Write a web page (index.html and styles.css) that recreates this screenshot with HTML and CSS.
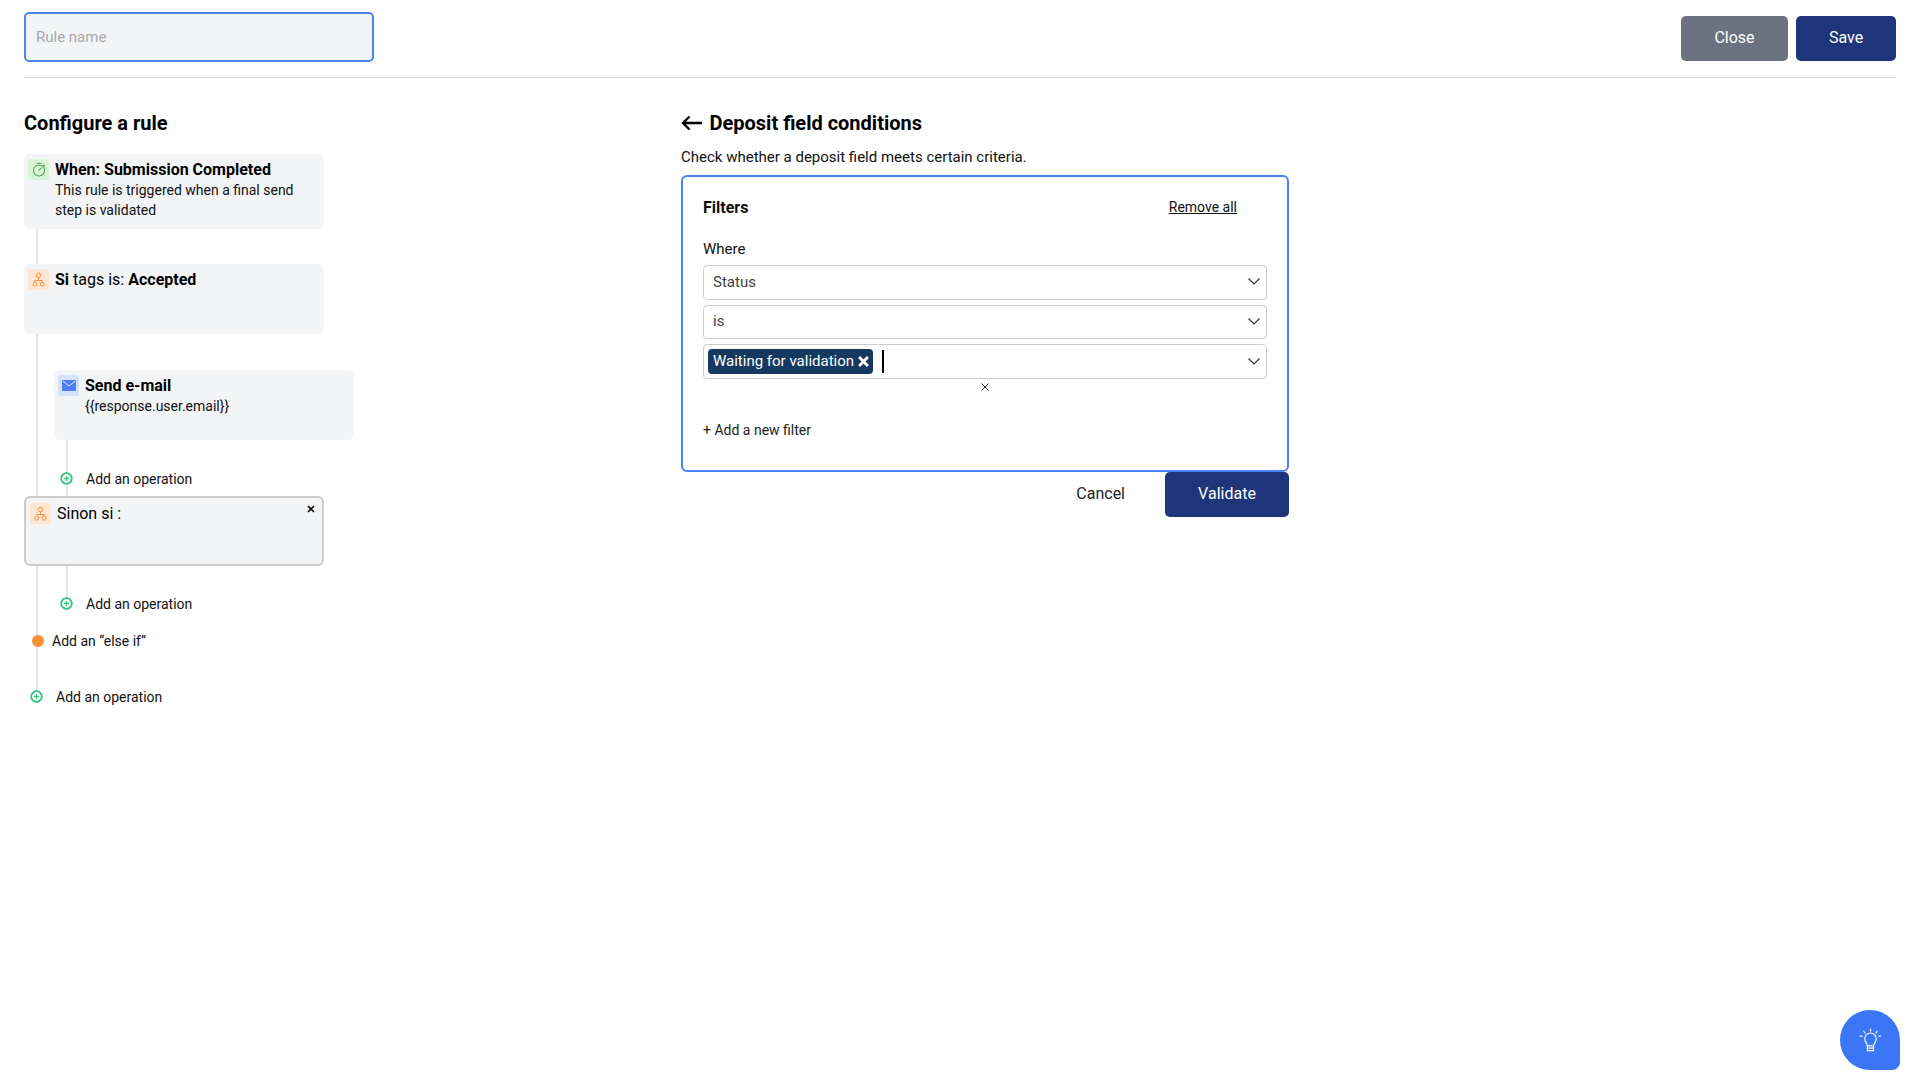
FILE: index.html
```html
<!DOCTYPE html>
<html lang="en">
<head>
    <meta charset="UTF-8">
    <title>Configure a rule</title>
    <link rel="stylesheet" href="styles.css">
</head>
<body>
    <header class="topbar">
        <input class="rule-name" type="text" placeholder="Rule name">
        <div class="topbar-actions">
            <button class="btn btn-close">Close</button>
            <button class="btn btn-save">Save</button>
        </div>
    </header>

    <main class="layout">
        <section class="rule-col">
            <h2 class="heading">Configure a rule</h2>

            <div class="tree">
                <div class="card card-when">
                    <span class="card-icon icon-green">
                        <svg width="14" height="15" viewBox="0 0 14 15" fill="none" stroke="#4aa04e" stroke-width="1.1" stroke-linecap="round"><circle cx="7" cy="8.500" r="5.500"/><path d="M5 1.200h4M7 8.500l2-2.500M11.500 3l1 1"/></svg>
                    </span>
                    <div class="card-text">
                        <div class="card-title"><b>When: Submission Completed</b></div>
                        <div class="card-desc">This rule is triggered when a final send step is validated</div>
                    </div>
                </div>

                <div class="card card-if">
                    <span class="card-icon icon-orange">
                        <svg width="13" height="15" viewBox="0 0 13 15" fill="none" stroke="#fb923c" stroke-width="1"><circle cx="6.500" cy="3.500" r="2.200"/><circle cx="2.800" cy="12.200" r="1.900"/><circle cx="10.200" cy="12.200" r="1.900"/><path d="M6.500 5.700v2.800M2.800 10.300V8.500h7.400v1.800"/></svg>
                    </span>
                    <div class="card-title"><b>Si</b> tags is: <b>Accepted</b></div>
                </div>

                <div class="branch branch-first">
                    <div class="card card-mail">
                        <span class="card-icon icon-blue">
                            <svg width="14" height="11" viewBox="0 0 14 11"><path d="M0 0h14v11H0z" fill="#4f7cf7"/><path d="M.5 1l6.500 5 6.500-5" fill="none" stroke="#dbe6fe" stroke-width="1"/></svg>
                        </span>
                        <div class="card-text">
                            <div class="card-title"><b>Send e-mail</b></div>
                            <div class="card-desc">{{response.user.email}}</div>
                        </div>
                    </div>
                    <div class="add-row add-row-one">
                        <svg class="plus-icon" width="13" height="13" viewBox="0 0 13 13" fill="none" stroke="#34c77f"><circle cx="6.500" cy="6.500" r="5.400" stroke-width="2"/><path d="M6.500 4v5M4 6.500h5" stroke-width="1.300"/></svg>
                        <span>Add an operation</span>
                    </div>
                </div>

                <div class="card card-else">
                    <span class="card-icon icon-orange">
                        <svg width="13" height="15" viewBox="0 0 13 15" fill="none" stroke="#fb923c" stroke-width="1"><circle cx="6.500" cy="3.500" r="2.200"/><circle cx="2.800" cy="12.200" r="1.900"/><circle cx="10.200" cy="12.200" r="1.900"/><path d="M6.500 5.700v2.800M2.800 10.300V8.500h7.400v1.800"/></svg>
                    </span>
                    <div class="card-title">Sinon si :</div>
                    <svg class="card-close" width="8" height="8" viewBox="0 0 8 8" stroke="#000" stroke-width="1.600"><path d="M1 1l6 6M7 1l-6 6"/></svg>
                </div>

                <div class="branch branch-second">
                    <div class="add-row">
                        <svg class="plus-icon" width="13" height="13" viewBox="0 0 13 13" fill="none" stroke="#34c77f"><circle cx="6.500" cy="6.500" r="5.400" stroke-width="2"/><path d="M6.500 4v5M4 6.500h5" stroke-width="1.300"/></svg>
                        <span>Add an operation</span>
                    </div>
                </div>

                <div class="else-row">
                    <span class="dot"></span>
                    <span>Add an “else if”</span>
                </div>

                <div class="add-row add-row-last">
                    <svg class="plus-icon" width="13" height="13" viewBox="0 0 13 13" fill="none" stroke="#34c77f"><circle cx="6.500" cy="6.500" r="5.400" stroke-width="2"/><path d="M6.500 4v5M4 6.500h5" stroke-width="1.300"/></svg>
                    <span>Add an operation</span>
                </div>
            </div>
        </section>

        <section class="filter-col">
            <h2 class="heading heading-back">
                <svg width="21" height="16" viewBox="0 0 21 16" fill="none" stroke="#000" stroke-width="2.400"><path d="M21 8H2M8.500 1.500L2 8l6.500 6.500"/></svg>
                Deposit field conditions
            </h2>
            <p class="filter-intro">Check whether a deposit field meets certain criteria.</p>

            <div class="filter-box">
                <div class="filter-head">
                    <b class="filter-title">Filters</b>
                    <a href="#" class="remove-all">Remove all</a>
                </div>
                <div class="where">Where</div>
                <div class="select-list">
                    <div class="select">
                        <span>Status</span>
                        <svg class="chevron" width="12" height="7" viewBox="0 0 12 7" fill="none" stroke="#333" stroke-width="1.200"><path d="M.5.5L6 6 11.500.5"/></svg>
                    </div>
                    <div class="select">
                        <span>is</span>
                        <svg class="chevron" width="12" height="7" viewBox="0 0 12 7" fill="none" stroke="#333" stroke-width="1.200"><path d="M.5.5L6 6 11.500.5"/></svg>
                    </div>
                    <div class="select select-multi">
                        <span class="chip">Waiting for validation
                            <svg width="11" height="11" viewBox="0 0 10 10" stroke="#fff" stroke-width="2.600"><path d="M1 1l8 8M9 1L1 9"/></svg>
                        </span>
                        <span class="caret"></span>
                        <svg class="chevron" width="12" height="7" viewBox="0 0 12 7" fill="none" stroke="#333" stroke-width="1.200"><path d="M.5.5L6 6 11.500.5"/></svg>
                    </div>
                </div>
                <div class="clear-row">
                    <svg width="8" height="8" viewBox="0 0 8 8" stroke="#222" stroke-width="1"><path d="M.5.5l7 7M7.500.5l-7 7"/></svg>
                </div>
                <div class="add-filter">+ Add a new filter</div>
            </div>

            <div class="filter-actions">
                <button class="link-btn">Cancel</button>
                <button class="btn btn-validate">Validate</button>
            </div>
        </section>
    </main>

    <button class="help-bubble" aria-label="Help">
        <svg width="23" height="25" viewBox="0 0 26 28" fill="none" stroke="#fff" stroke-width="1.300" stroke-linecap="round"><path d="M9.500 20c0-2.500-3-4-3-8a6.500 6.500 0 0 1 13 0c0 4-3 5.500-3 8z"/><path d="M9.500 20v5.500h7V20M9.500 22.700h7M13 1v2.500M5.500 3.500l1.200 2M20.500 3.500l-1.200 2M1.500 9h2M22.500 9h2"/></svg>
    </button>
</body>
</html>
```

FILE: styles.css
```css
* {
    margin: 0;
    padding: 0;
    box-sizing: border-box;
    font-family: 'Roboto', 'Liberation Sans', sans-serif;
}

body {
    background-color: #ffffff;
    color: #111111;
    padding: 12px 24px 0;
    min-height: 100vh;
    font-size: 14px;
    line-height: 20px;
}

.topbar {
    display: flex;
    justify-content: space-between;
    padding-bottom: 15px;
    border-bottom: 1px solid #dcdce6;
}

.rule-name {
    width: 350px;
    height: 50px;
    padding: 0 10px;
    background-color: #f3f4f6;
    border: 2px solid #4a85f6;
    border-radius: 5px;
    font-size: 15px;
    outline: none;
}

.rule-name::placeholder {
    color: #a8a8a8;
}

.topbar-actions {
    display: flex;
    gap: 8px;
    padding-top: 4px;
}

.btn {
    height: 45px;
    padding-bottom: 2px;
    border: none;
    border-radius: 5px;
    color: #ffffff;
    font-size: 16px;
    font-weight: 400;
    cursor: pointer;
}

.btn-close {
    width: 107px;
    background-color: #6b7280;
}

.btn-save {
    width: 100px;
    background-color: #1e347b;
}

.layout {
    display: flex;
    padding-top: 33px;
}

.heading {
    font-size: 20px;
    line-height: 24px;
    font-weight: 700;
    color: #000000;
}

.rule-col {
    width: 657px;
}

.tree {
    position: relative;
    margin-top: 19px;
    isolation: isolate;
}

/* grey line behind the cards */
.tree::before {
    content: '';
    position: absolute;
    left: 12px;
    top: 60px;
    height: 480px;
    width: 2px;
    background-color: #e5e7eb;
    z-index: -1;
}

.card {
    position: relative;
    display: flex;
    gap: 6px;
    width: 300px;
    min-height: 70px;
    padding: 5px 4px;
    background-color: #f3f4f6;
    border-radius: 6px;
}

.card-when {
    min-height: 75px;
}

.card-if {
    margin-top: 35px;
}

.card-mail {
    margin-top: 36px;
}

.card-else {
    margin-top: 7.5px;
    border: 2px solid #cccccc;
}

.card-icon {
    flex: none;
    display: flex;
    align-items: center;
    justify-content: center;
    width: 21px;
    height: 21px;
    border-radius: 2px;
}

.icon-green {
    background-color: #d8f5d8;
}

.icon-orange {
    background-color: #ffe6d2;
}

.icon-blue {
    background-color: #d4e2fd;
}

.card-title {
    font-size: 16px;
    line-height: 21px;
    color: #000000;
}

.card-desc {
    font-size: 14px;
    line-height: 20px;
}

.card-close {
    position: absolute;
    right: 7px;
    top: 7px;
}

.branch {
    position: relative;
    margin-left: 30px;
}

.branch::before {
    content: '';
    position: absolute;
    left: 12px;
    top: 0;
    width: 2px;
    background-color: #e5e7eb;
    z-index: -1;
}

.branch-first::before {
    height: 140px;
}

.branch-second {
    padding-top: 27.5px;
}

.branch-second::before {
    height: 34px;
}

.add-row {
    display: flex;
    align-items: center;
    gap: 13px;
    height: 20px;
    padding-left: 6px;
}

.add-row-one {
    margin-top: 28.5px;
}

.add-row-last {
    margin-top: 36px;
}

.else-row {
    display: flex;
    align-items: center;
    gap: 8px;
    height: 20px;
    margin-top: 17px;
    padding-left: 8px;
}

.plus-icon {
    flex: none;
    background-color: #ffffff;
    border-radius: 50%;
}

.dot {
    flex: none;
    width: 12px;
    height: 12px;
    border-radius: 50%;
    background-color: #fb8f35;
}

.filter-col {
    width: 608px;
}

.heading-back {
    display: flex;
    align-items: center;
    gap: 7.5px;
}

.filter-intro {
    margin-top: 11.5px;
    font-size: 15px;
}

.filter-box {
    margin-top: 8.5px;
    height: 297px;
    padding: 20px;
    border: 2px solid #4a85f6;
    border-radius: 6px;
}

.filter-head {
    display: flex;
    justify-content: space-between;
    padding-right: 30px;
    font-size: 16px;
}

.filter-title {
    padding-top: 1px;
}

.remove-all {
    color: #111111;
    font-size: 14px;
}

.where {
    margin-top: 21px;
    font-size: 15px;
}

.select-list {
    display: flex;
    flex-direction: column;
    gap: 5px;
    margin-top: 6px;
}

.select {
    display: flex;
    align-items: center;
    height: 34.67px;
    padding: 0 4px 1px 9px;
    border: 1px solid #cccccc;
    border-radius: 4px;
    color: #444444;
    font-size: 15px;
}

.select-multi {
    padding-left: 4px;
}

.chevron {
    margin-left: auto;
    margin-right: 2px;
}

.chip {
    display: inline-flex;
    align-items: center;
    gap: 4px;
    height: 25px;
    padding: 0 4px 0 5px;
    background-color: #163a5f;
    border-radius: 4px;
    color: #ffffff;
}

.caret {
    width: 1.5px;
    height: 23px;
    margin-left: 9px;
    background-color: #000000;
}

.clear-row {
    display: flex;
    justify-content: center;
    height: 15px;
    padding-top: 4px;
    line-height: 0;
}

.add-filter {
    margin-top: 26px;
    color: #222222;
}

.filter-actions {
    display: flex;
    justify-content: flex-end;
    align-items: center;
    gap: 40px;
}

.link-btn {
    background: none;
    border: none;
    padding-bottom: 2px;
    font-size: 16px;
    color: #222222;
    cursor: pointer;
}

.btn-validate {
    width: 124px;
    background-color: #1e347b;
}

.help-bubble {
    position: fixed;
    right: 20px;
    bottom: 10px;
    display: flex;
    align-items: center;
    justify-content: center;
    width: 60px;
    height: 60px;
    border: none;
    border-radius: 30px 30px 8px 30px;
    background-color: #3b76f6;
    cursor: pointer;
}
```
